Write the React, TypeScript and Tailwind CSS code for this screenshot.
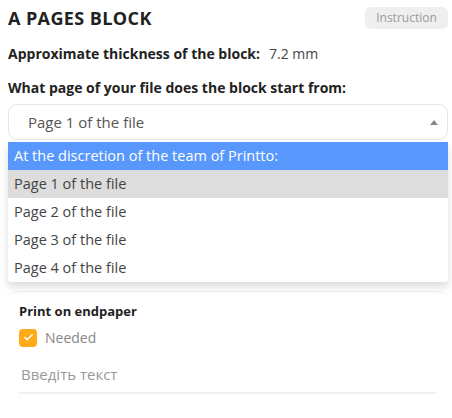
import React from 'react';
import { Check } from 'lucide-react';

const options = [
  'At the discretion of the team of Printto:',
  'Page 1 of the file',
  'Page 2 of the file',
  'Page 3 of the file',
  'Page 4 of the file',
];

export default function App() {
  return (
    <div className="w-[452px] h-[418px] overflow-hidden bg-white pl-2 pr-[4px] font-['Open_Sans',sans-serif] text-[#222]">
      <div className="flex items-center justify-between pt-[7px]">
        <h2 className="text-[18px] font-bold leading-[22px] tracking-[0.4px]">A PAGES BLOCK</h2>
        <button className="h-[22px] w-[83px] rounded-md bg-[#efefef] text-[12px] text-[#9a9a9a]">Instruction</button>
      </div>

      <div className="mt-[15px] text-[14px] leading-[20px]">
        <span className="font-bold">Approximate thickness of the block:</span>
        <span className="ml-[9px] text-[#444]">7.2 mm</span>
      </div>

      <div className="mt-[14px] text-[14px] font-bold leading-[20px]">What page of your file does the block start from:</div>

      <div className="mt-[6px] flex h-[36px] items-center justify-between rounded-[9px] border border-[#e6e6e6] pl-[19px] pr-[7px] text-[15px] text-[#555]">
        <span>Page 1 of the file</span>
        <svg width="8" height="5" viewBox="0 0 8 5" className="mr-[2px]">
          <path d="M0 5 L4 0 L8 5 Z" fill="#888" />
        </svg>
      </div>

      <ul className="mt-[2px] overflow-hidden rounded-b-[4px] bg-white text-[14.5px] text-[#444] shadow-[0_5px_8px_rgba(0,0,0,0.14)]">
        {options.map((o, i) => (
          <li
            key={o}
            className={`flex h-[28px] items-center px-[6px] ${
              i === 0 ? 'bg-[#5897fb] text-white' : i === 1 ? 'bg-[#dddddd]' : ''
            }`}
          >
            {o}
          </li>
        ))}
      </ul>

      <div className="mt-[9px] rounded-t-[10px] border-t border-[#ececec] px-[11px] pt-[9px]">
        <div className="text-[13px] font-bold leading-[20px]">Print on endpaper</div>
        <label className="mt-[6px] flex items-center gap-[8px]">
          <span className="flex h-[18px] w-[18px] items-center justify-center rounded-[4px] bg-[#ffab19]">
            <Check className="h-[11px] w-[11px] text-white" strokeWidth={3.5} />
          </span>
          <span className="text-[14px] text-[#888]">Needed</span>
        </label>
        <input
          placeholder="Введіть текст"
          className="mt-[16px] h-[30px] w-[417px] border-b-2 border-[#f0f0f0] px-[2px] pb-[8px] text-[15px] outline-none placeholder:text-[#999]"
        />
      </div>
    </div>
  );
}
